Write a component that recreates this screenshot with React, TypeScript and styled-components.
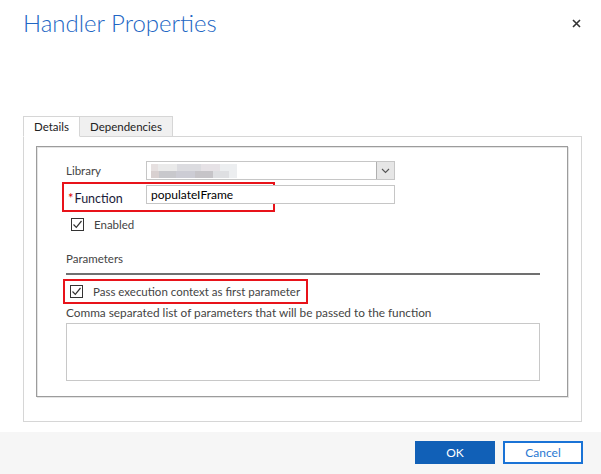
import React from "react";
import styled, { createGlobalStyle } from "styled-components";

const FONT = `"Segoe UI", Lato, "Liberation Sans", sans-serif`;

const GlobalStyle = createGlobalStyle`
  html, body { margin: 0; padding: 0; background: #fff; }
  body { font-family: ${FONT}; }
  * { box-sizing: border-box; }
`;

const Dialog = styled.div`
  width: 601px;
  height: 474px;
  display: flex;
  flex-direction: column;
  background: #fff;
  overflow: hidden;
`;

const Header = styled.div`
  height: 116px;
  display: flex;
  align-items: flex-start;
  justify-content: space-between;
  padding: 7px 20px 0 23px;
`;

const Title = styled.h1`
  margin: 0;
  font-family: ${FONT};
  font-weight: 300;
  font-size: 24px;
  line-height: 32px;
  color: #2266c4;
`;

const CloseButton = styled.button`
  border: 0;
  background: none;
  padding: 0;
  margin-top: 11px;
  width: 10px;
  height: 10px;
  display: flex;
  align-items: center;
  justify-content: center;
  cursor: pointer;
`;

const Body = styled.div`
  flex: 1;
  padding: 0 19px 0 23px;
`;

const TabRow = styled.div`
  display: flex;
  height: 20px;
`;

const Tab = styled.div<{ $active?: boolean }>`
  height: 21px;
  padding: 0 10px;
  display: flex;
  align-items: center;
  font-size: 11.5px;
  color: #222;
  background: ${(p) => (p.$active ? "#fff" : "#f0f0f0")};
  border: 1px solid #d6d6d6;
  border-bottom: ${(p) => (p.$active ? "1px solid #fff" : "1px solid #d6d6d6")};
  position: relative;
  z-index: 1;
  & + & { border-left: 0; }
`;

const TabFrame = styled.div`
  height: 286px;
  border: 1px solid #d6d6d6;
  padding: 9px 13px 24px 12px;
`;

const Panel = styled.div`
  height: 251px;
  border: 1px solid #9c9c9c;
  box-shadow: inset 1px 1px 0 #e4e4e4, 1px 1px 0 #e4e4e4;
  padding: 14px 27px 15px 29px;
  display: flex;
  flex-direction: column;
`;

const FieldRow = styled.div`
  display: flex;
  align-items: center;
  height: 19px;
`;

const Label = styled.div<{ $strong?: boolean }>`
  width: 80px;
  font-size: ${(p) => (p.$strong ? "12.5px" : "11.5px")};
  color: ${(p) => (p.$strong ? "#1b1b3a" : "#444")};
  display: flex;
  align-items: baseline;
  padding-left: ${(p) => (p.$strong ? "4px" : "0")};
  margin-top: ${(p) => (p.$strong ? "1px" : "0")};
`;

const Asterisk = styled.span`
  color: #e00000;
  font-size: 13px;
  margin-right: 1px;
`;

const SelectBox = styled.div`
  width: 249px;
  height: 19px;
  border: 1px solid #c6c6c6;
  display: flex;
  align-items: stretch;
  background: #fff;
`;

const Blurred = styled.div`
  margin: 2px 0 0 4px;
  width: 86px;
  height: 14px;
  background:
    linear-gradient(90deg, #e6e0e0 0 8%, #eaeaea 8% 30%, #dcdce0 30% 58%, #e6e2e6 58% 80%, #eceef0 80%);
  filter: blur(0.6px);
  position: relative;
  &::after {
    content: "";
    position: absolute;
    left: 0;
    right: 8px;
    bottom: 0;
    height: 7px;
    background: linear-gradient(90deg, #d8d0d0 0 10%, #c8c8cc 10% 32%, #ccccd4 32% 56%, #c6c4c8 56% 80%, #dedfe2 80%);
  }
`;

const SelectSpacer = styled.div`
  flex: 1;
`;

const DropButton = styled.div`
  width: 18px;
  border-left: 1px solid #b0b0b0;
  background: #e6e6e6;
  display: flex;
  align-items: center;
  justify-content: center;
`;

const TextInput = styled.div`
  width: 249px;
  height: 19px;
  border: 1px solid #c6c6c6;
  padding: 0 4px;
  display: flex;
  align-items: center;
  font-size: 12px;
  color: #000;
  background: #fff;
`;

const Highlight = styled.div<{ $w: number; $h: number }>`
  width: ${(p) => p.$w}px;
  height: ${(p) => p.$h}px;
  border: 2px solid #e8131a;
  display: flex;
  align-items: center;
`;

const FunctionRow = styled.div`
  display: flex;
  align-items: center;
  margin: 2px 0 0 -4px;
  position: relative;
`;

const FunctionInputWrap = styled.div`
  position: absolute;
  left: 84px;
  top: 3px;
`;

const CheckRow = styled.label`
  display: flex;
  align-items: center;
  gap: 10px;
  padding-left: 5px;
  font-size: 11.5px;
  color: #444;
`;

const CheckBox = styled.span`
  width: 13px;
  height: 13px;
  border: 1px solid #333;
  display: flex;
  align-items: center;
  justify-content: center;
  background: #fff;
`;

const SectionTitle = styled.div`
  font-size: 11.5px;
  color: #444;
  margin-top: 21px;
  padding-bottom: 8px;
  border-bottom: 2px solid #707070;
`;

const Hint = styled.div`
  font-size: 11.8px;
  color: #444;
  margin-top: 1px;
`;

const TextArea = styled.div`
  margin-top: 3px;
  height: 59px;
  border: 1px solid #c8c8c8;
  background: #fff;
`;

const Footer = styled.div`
  height: 42px;
  background: #f6f6f6;
  display: flex;
  align-items: center;
  justify-content: flex-end;
  gap: 8px;
  padding: 0 18px 2px 0;
`;

const Button = styled.button<{ $primary?: boolean }>`
  width: 80px;
  height: 23px;
  font-family: ${FONT};
  font-size: 12px;
  border: 1px solid ${(p) => (p.$primary ? "#1160b7" : "#1a73d6")};
  outline: ${(p) => (p.$primary ? "none" : "1px solid #1a73d6")};
  outline-offset: -2px;
  background: ${(p) => (p.$primary ? "#1160b7" : "#fff")};
  color: ${(p) => (p.$primary ? "#fff" : "#2a78d2")};
  padding: 0;
  cursor: pointer;
`;

const Check = () => (
  <CheckBox>
    <svg width="11" height="11" viewBox="0 0 11 11">
      <path d="M1.5 5.5 L4.3 8.3 L9.5 2" fill="none" stroke="#333" strokeWidth="1.2" />
    </svg>
  </CheckBox>
);

export default function App() {
  return (
    <Dialog>
      <GlobalStyle />
      <Header>
        <Title>Handler Properties</Title>
        <CloseButton aria-label="Close">
          <svg width="9" height="9" viewBox="0 0 9 9">
            <path d="M1 1 L8 8 M8 1 L1 8" stroke="#333" strokeWidth="1.6" />
          </svg>
        </CloseButton>
      </Header>
      <Body>
        <TabRow>
          <Tab $active>Details</Tab>
          <Tab>Dependencies</Tab>
        </TabRow>
        <TabFrame>
          <Panel>
            <FieldRow>
              <Label>Library</Label>
              <SelectBox>
                <Blurred />
                <SelectSpacer />
                <DropButton>
                  <svg width="9" height="6" viewBox="0 0 9 6">
                    <path d="M1 1 L4.5 4.5 L8 1" fill="none" stroke="#555" strokeWidth="1.1" />
                  </svg>
                </DropButton>
              </SelectBox>
            </FieldRow>
            <FunctionRow>
              <Highlight $w={213} $h={30}>
                <Label $strong>
                  <Asterisk>*</Asterisk>Function
                </Label>
              </Highlight>
              <FunctionInputWrap>
                <TextInput>populateIFrame</TextInput>
              </FunctionInputWrap>
            </FunctionRow>
            <CheckRow style={{ marginTop: 6 }}>
              <Check />
              Enabled
            </CheckRow>
            <SectionTitle>Parameters</SectionTitle>
            <Highlight $w={245} $h={25} style={{ marginLeft: -3, marginTop: 4 }}>
              <CheckRow>
                <Check />
                Pass execution context as first parameter
              </CheckRow>
            </Highlight>
            <Hint>Comma separated list of parameters that will be passed to the function</Hint>
            <TextArea />
          </Panel>
        </TabFrame>
      </Body>
      <Footer>
        <Button $primary>OK</Button>
        <Button>Cancel</Button>
      </Footer>
    </Dialog>
  );
}
